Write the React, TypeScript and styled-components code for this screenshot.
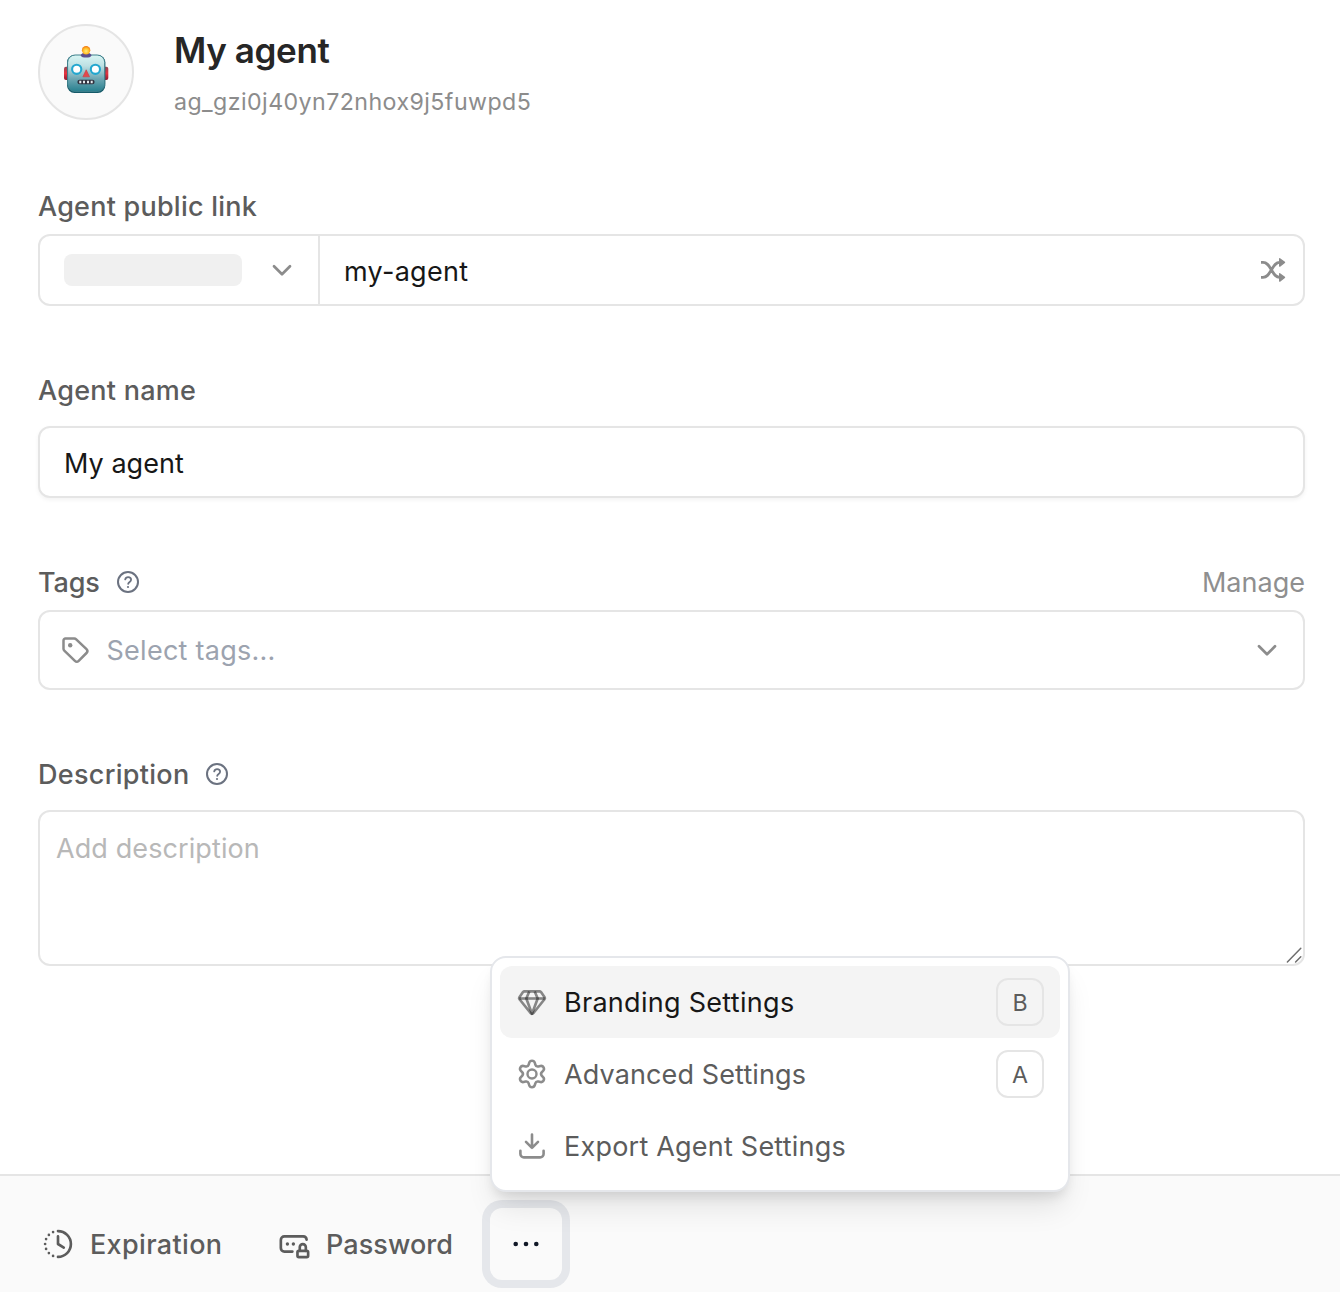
import React from "react";
import styled, { createGlobalStyle } from "styled-components";

const GlobalStyle = createGlobalStyle`
  * { box-sizing: border-box; }
  body {
    margin: 0;
    background: #fff;
    font-family: Inter, "Liberation Sans", sans-serif;
    font-size: 27px;
    line-height: 39px;
    color: #171717;
    -webkit-font-smoothing: antialiased;
  }
  button, input, textarea { font: inherit; color: inherit; margin: 0; }
  svg { display: block; flex: none; }
`;

const Page = styled.div`
  display: flex;
  flex-direction: column;
  width: 1340px;
  height: 1292px;
  overflow: hidden;
`;

const Form = styled.main`
  flex: 1;
  padding: 24px 35px 0 38px;
`;

const Header = styled.header`
  display: flex;
  gap: 40px;
  height: 96px;
`;

const Avatar = styled.div`
  display: flex;
  align-items: center;
  justify-content: center;
  width: 96px;
  height: 96px;
  border: 2px solid #e5e5e5;
  border-radius: 50%;
  background: #fafafa;
`;

const Title = styled.h1`
  margin: 0;
  padding-top: 1px;
  font-size: 35px;
  line-height: 50px;
  font-weight: 600;
  letter-spacing: -0.38px;
  color: #262626;
`;

const AgentId = styled.div`
  margin-top: 10px;
  font-size: 23.200px;
  line-height: 34px;
  letter-spacing: 0.43px;
  color: #8c8c8c;
`;

const Field = styled.section<{ $top: number; $gap: number }>`
  display: flex;
  flex-direction: column;
  gap: ${(p) => p.$gap}px;
  margin-top: ${(p) => p.$top}px;
`;

const LabelRow = styled.div`
  display: flex;
  align-items: center;
  justify-content: space-between;
  height: 40px;
`;

const Label = styled.label<{ $track: number }>`
  display: flex;
  align-items: center;
  gap: 17px;
  font-weight: 500;
  letter-spacing: ${(p) => p.$track}px;
  color: #5c5c5c;
`;

const LabelText = styled.span`
  padding-top: 1px;
`;

const Manage = styled.a`
  padding-top: 1px;
  letter-spacing: 0.02px;
  color: #8f8f8f;
`;

const Box = styled.div<{ $height: number; $shadow?: boolean }>`
  display: flex;
  align-items: center;
  height: ${(p) => p.$height}px;
  border: 2px solid #e5e5e5;
  border-radius: 12px;
  background: #fff;
  box-shadow: ${(p) => (p.$shadow ? "0 2px 4px rgba(0, 0, 0, 0.05)" : "none")};
`;

const Domain = styled.div`
  display: flex;
  align-items: center;
  justify-content: space-between;
  align-self: stretch;
  width: 280px;
  padding: 0 24px;
  border-right: 2px solid #e5e5e5;
`;

const Skeleton = styled.div`
  width: 178px;
  height: 32px;
  border-radius: 8px;
  background: #f0f0f0;
`;

const TextInput = styled.input<{ $track: number }>`
  flex: 1;
  min-width: 0;
  height: 100%;
  padding: 3px 24px 0;
  border: 0;
  outline: 0;
  background: transparent;
  letter-spacing: ${(p) => p.$track}px;
`;

const IconSlot = styled.span<{ $left?: number; $right?: number }>`
  margin-left: ${(p) => p.$left ?? 0}px;
  margin-right: ${(p) => p.$right ?? 0}px;
`;

const Placeholder = styled.span`
  flex: 1;
  padding: 1px 0 0 17.500px;
  letter-spacing: 0.26px;
  color: #9ca3af;
`;

const AreaWrap = styled.div`
  position: relative;
  height: 156px;
`;

const Area = styled.textarea`
  display: block;
  width: 100%;
  height: 100%;
  padding: 17px 16px 15px;
  border: 2px solid #e5e5e5;
  border-radius: 12px;
  outline: 0;
  resize: none;
  letter-spacing: 0.1px;
  &::placeholder { color: #b8b8b8; }
`;

const Grip = styled.svg`
  position: absolute;
  right: 2px;
  bottom: 1px;
`;

const Footer = styled.footer`
  display: flex;
  align-items: center;
  height: 118px;
  padding: 20px 0 0 42px;
  border-top: 2px solid #e5e5e5;
  background: #fafafa;
`;

const FooterAction = styled.div<{ $width: number; $track: number }>`
  display: flex;
  align-items: center;
  gap: 16px;
  width: ${(p) => p.$width}px;
  font-weight: 500;
  letter-spacing: ${(p) => p.$track}px;
  color: #5c5c5c;
`;

const MoreAnchor = styled.div`
  position: relative;
`;

const MoreButton = styled.button`
  display: flex;
  align-items: center;
  justify-content: center;
  width: 72px;
  height: 72px;
  padding: 0;
  border: 0;
  border-radius: 12px;
  background: transparent;
  box-shadow: 0 0 0 8px #e5e7eb;
`;

const Menu = styled.div`
  position: absolute;
  left: 0;
  bottom: 88px;
  width: 580px;
  padding: 8px;
  border: 2px solid #e5e7eb;
  border-radius: 16px;
  background: #fff;
  box-shadow: 0 20px 30px -6px rgba(0, 0, 0, 0.1), 0 8px 12px -4px rgba(0, 0, 0, 0.1);
`;

const MenuItem = styled.div<{ $active?: boolean }>`
  display: flex;
  align-items: center;
  gap: 16px;
  height: 72px;
  padding: 0 16px;
  border-radius: 12px;
  background: ${(p) => (p.$active ? "#f4f4f4" : "transparent")};
  color: ${(p) => (p.$active ? "#171717" : "#5c5c5c")};
`;

const MenuText = styled.span<{ $track: number }>`
  flex: 1;
  padding-top: 1px;
  letter-spacing: ${(p) => p.$track}px;
`;

const Key = styled.kbd`
  display: flex;
  align-items: center;
  justify-content: center;
  width: 48px;
  height: 48px;
  padding-top: 2px;
  border: 2px solid #e5e5e5;
  border-radius: 12px;
  font-family: inherit;
  font-size: 23.200px;
  line-height: 32px;
  color: #5c5c5c;
`;

const Robot = () => (
  <svg width="48" height="52" viewBox="0 0 48 52">
    <defs>
      <linearGradient id="face" x1="0" y1="0" x2="0" y2="1">
        <stop offset="0" stopColor="#d9f6f4" />
        <stop offset="0.3" stopColor="#bde0e3" />
        <stop offset="0.65" stopColor="#6fa7b3" />
        <stop offset="1" stopColor="#27808f" />
      </linearGradient>
      <linearGradient id="ear" x1="0" y1="0" x2="0" y2="1">
        <stop offset="0" stopColor="#8e4654" />
        <stop offset="0.5" stopColor="#e8333f" />
        <stop offset="1" stopColor="#8f1c33" />
      </linearGradient>
      <radialGradient id="bulb" cx="0.5" cy="0.6" r="0.6">
        <stop offset="0" stopColor="#ffec7a" />
        <stop offset="0.55" stopColor="#ffc02a" />
        <stop offset="1" stopColor="#f2750e" />
      </radialGradient>
    </defs>
    <rect x="2" y="20.700" width="6" height="13.300" rx="2" fill="url(#ear)" />
    <rect x="40.300" y="20.700" width="6" height="13.300" rx="2" fill="url(#ear)" />
    <rect x="5" y="9" width="38.300" height="38" rx="7.500" fill="#155a69" />
    <rect x="5.600" y="9" width="37.100" height="36.400" rx="7.500" fill="url(#face)" stroke="#3f818d" strokeWidth="1" />
    <path d="M18.600 9.400c.6-2 2.800-3 5.500-3s4.900 1 5.500 3c-.8 1.500-2.800 2.200-5.500 2.200s-4.700-.7-5.500-2.200z" fill="#5c4f8e" />
    <circle cx="24.100" cy="4.300" r="4.200" fill="url(#bulb)" />
    <circle cx="14.700" cy="23.300" r="4.600" fill="#fff" stroke="#24a7cf" strokeWidth="2.100" />
    <circle cx="33.400" cy="23.300" r="4.600" fill="#fff" stroke="#24a7cf" strokeWidth="2.100" />
    <path d="M24.200 23.800l3.300 7h-6.600z" fill="#e4484b" stroke="#c8434b" strokeWidth="0.700" strokeLinejoin="round" />
    <rect x="15.400" y="33.700" width="17.200" height="4.600" rx="2.200" fill="#30323f" />
    <path d="M17.300 34.700h2v2.600h-2zM21 34.700h2v2.600h-2zM25 34.700h2v2.600h-2zM28.700 34.700h2v2.600h-2z" fill="#e4eaed" />
  </svg>
);

const Chevron = () => (
  <svg width="24" height="24" viewBox="0 0 24 24" fill="none" stroke="#8c8c8c" strokeWidth="2.700" strokeLinecap="round" strokeLinejoin="round">
    <path d="M4 8.300l8 8 8-8" />
  </svg>
);

const Shuffle = () => (
  <svg width="28" height="28" viewBox="0 0 28 28" fill="none" stroke="#8c8c8c" strokeWidth="2.800">
    <path d="M2 6.400h2c4.200 0 5.800 3.200 8.400 7.500s4.200 7.500 8.400 7.500M2 21.400h2c4.200 0 5.800-3.200 8.400-7.500s4.200-7.500 8.400-7.500" />
    <path d="M20.700 2.700l4.800 3.700-4.800 3.700zM20.700 17.700l4.800 3.700-4.800 3.700z" fill="#8c8c8c" strokeWidth="1.400" strokeLinejoin="round" />
  </svg>
);

const Help = () => (
  <svg width="22" height="24" viewBox="1 0 22 24" fill="none" stroke="#6b7280" strokeWidth="2" strokeLinecap="round" strokeLinejoin="round">
    <circle cx="12" cy="12" r="10" />
    <path d="M9.200 9.400c.4-1.400 1.500-2.200 2.900-2.200 1.700 0 3 1.100 3 2.600 0 2.100-2.700 2.100-2.900 4" strokeWidth="1.800" />
    <circle cx="12" cy="17" r="1.100" fill="#6b7280" stroke="none" />
  </svg>
);

const Tag = () => (
  <svg width="28" height="28" viewBox="0 0 28 28" fill="none" stroke="#8c8c8c" strokeWidth="2.500" strokeLinejoin="round">
    <path d="M2.500 4.400a1.900 1.900 0 0 1 1.900-1.900h8.900c.7 0 1.400.3 1.900.8l10.300 9.900a2.700 2.700 0 0 1 0 3.800l-7.800 7.800a2.700 2.700 0 0 1-3.800 0L3.300 14.600a2.700 2.700 0 0 1-.8-1.900z" />
    <circle cx="9.200" cy="9.300" r="2.200" fill="#8c8c8c" stroke="none" />
  </svg>
);

const Diamond = () => (
  <svg width="32" height="32" viewBox="0 0 32 32" fill="none" stroke="#171717" strokeOpacity="0.5" strokeWidth="2.600" strokeLinejoin="round">
    <path d="M8.500 5.400h15a2 2 0 0 1 1.500.7l3.600 5.200a1.600 1.600 0 0 1-.1 2L17.300 27.200a1.700 1.700 0 0 1-2.600 0L3.500 13.300a1.600 1.600 0 0 1-.1-2L7 6.100a2 2 0 0 1 1.500-.7z" />
    <path d="M3.300 12.500h25.400" />
    <path d="M13.300 5.400l-3 7.100L16 27.800l5.700-15.300-3-7.100" />
  </svg>
);

const Gear = () => (
  <svg width="32" height="32" viewBox="0 0 32 32" fill="none" stroke="#8c8c8c" strokeWidth="2.400" strokeLinejoin="round">
    <circle cx="16" cy="16" r="4.500" />
    <path
      transform="translate(16 16) scale(1.070) translate(-16 -15)"
      d="M13.400 4.500C13.800 3.100 14.700 2.600 16 2.600s2.200.5 2.600 1.900l.5 1.700c.4 1.300 1.600 2 2.900 1.700l1.800-.4c1.400-.3 2.400.2 3 1.300s.6 2.200-.4 3.200l-1.200 1.300c-.9 1-.9 2.400 0 3.400l1.200 1.300c1 1 1 2.100.4 3.200s-1.600 1.600-3 1.300l-1.800-.4c-1.300-.3-2.500.4-2.900 1.700l-.5 1.700c-.4 1.400-1.300 1.900-2.600 1.900s-2.200-.5-2.600-1.900l-.5-1.700c-.4-1.300-1.600-2-2.900-1.700l-1.800.4c-1.400.3-2.400-.2-3-1.300s-.6-2.200.4-3.200l1.200-1.300c.9-1 .9-2.400 0-3.400l-1.200-1.300c-1-1-1-2.100-.4-3.200s1.600-1.600 3-1.300l1.800.4c1.300.3 2.500-.4 2.900-1.700z"
    />
  </svg>
);

const Download = () => (
  <svg width="32" height="32" viewBox="0 0 32 32" fill="none" stroke="#8c8c8c" strokeWidth="2.600" strokeLinecap="round" strokeLinejoin="round">
    <path d="M16 4.500v13.300M10 11.800l6 6 6-6" />
    <path d="M4.400 20.700v3.200a3.500 3.500 0 0 0 3.500 3.500h16.200a3.500 3.500 0 0 0 3.500-3.500v-3.200" />
  </svg>
);

const Clock = () => (
  <svg width="32" height="32" viewBox="0 0 18 18" fill="none" stroke="#5c5c5c" strokeWidth="1.500" strokeLinecap="round" strokeLinejoin="round">
    <path d="M9 1.750a7.250 7.250 0 0 1 0 14.500M9 4.750V9l3.250 2" />
    <g fill="#5c5c5c" stroke="none">
      <circle cx="6.230" cy="2.300" r="0.750" />
      <circle cx="3.870" cy="3.870" r="0.750" />
      <circle cx="2.300" cy="6.230" r="0.750" />
      <circle cx="1.750" cy="9" r="0.750" />
      <circle cx="2.300" cy="11.770" r="0.750" />
      <circle cx="3.870" cy="14.130" r="0.750" />
      <circle cx="6.230" cy="15.700" r="0.750" />
    </g>
  </svg>
);

const Password = () => (
  <svg width="32" height="32" viewBox="0 0 18 18" fill="none" stroke="#5c5c5c" strokeWidth="1.500" strokeLinecap="round" strokeLinejoin="round">
    <path d="M16.100 6.500a2 2 0 0 0-1.900-1.750H3.600a2 2 0 0 0-2 2v4.500a2 2 0 0 0 2 2h4.500" />
    <rect x="10.950" y="12.850" width="6" height="3.500" rx="0.800" />
    <path d="M12.250 12.850v-2.100a1.700 1.700 0 0 1 3.400 0v2.100" />
    <g fill="#5c5c5c" stroke="none">
      <circle cx="5.300" cy="9" r="0.950" />
      <circle cx="8.650" cy="9" r="0.950" />
    </g>
  </svg>
);

const Dots = () => (
  <svg width="32" height="32" viewBox="0 0 32 32" fill="#111827">
    <circle cx="5.700" cy="16" r="2.300" />
    <circle cx="16" cy="16" r="2.300" />
    <circle cx="26.300" cy="16" r="2.300" />
  </svg>
);

export default function App() {
  return (
    <Page>
      <GlobalStyle />
      <Form>
        <Header>
          <Avatar><Robot /></Avatar>
          <div>
            <Title>My agent</Title>
            <AgentId>ag_gzi0j40yn72nhox9j5fuwpd5</AgentId>
          </div>
        </Header>

        <Field $top={66} $gap={8}>
          <LabelRow>
            <Label $track={0.23}><LabelText>Agent public link</LabelText></Label>
          </LabelRow>
          <Box $height={72}>
            <Domain>
              <Skeleton />
              <Chevron />
            </Domain>
            <TextInput $track={0.29} defaultValue="my-agent" />
            <IconSlot $right={16}><Shuffle /></IconSlot>
          </Box>
        </Field>

        <Field $top={64} $gap={16}>
          <LabelRow>
            <Label $track={0.25}><LabelText>Agent name</LabelText></Label>
          </LabelRow>
          <Box $height={72} $shadow>
            <TextInput $track={0.03} defaultValue="My agent" />
          </Box>
        </Field>

        <Field $top={64} $gap={8}>
          <LabelRow>
            <Label $track={-0.12}><LabelText>Tags</LabelText> <Help /></Label>
            <Manage>Manage</Manage>
          </LabelRow>
          <Box $height={80}>
            <IconSlot $left={21}><Tag /></IconSlot>
            <Placeholder>Select tags...</Placeholder>
            <IconSlot $right={24}><Chevron /></IconSlot>
          </Box>
        </Field>

        <Field $top={64} $gap={16}>
          <LabelRow>
            <Label $track={0.29}><LabelText>Description</LabelText> <Help /></Label>
          </LabelRow>
          <AreaWrap>
            <Area placeholder="Add description" />
            <Grip width="18" height="18" viewBox="0 0 18 18" stroke="#6e6e6e" strokeWidth="1.500" strokeLinecap="round">
              <path d="M2.400 15L15.800 1.200M10.600 15l5.200-5.200" />
            </Grip>
          </AreaWrap>
        </Field>
      </Form>

      <Footer>
        <FooterAction $width={236} $track={0.34}><Clock /><LabelText>Expiration</LabelText></FooterAction>
        <FooterAction $width={212} $track={0.07}><Password /><LabelText>Password</LabelText></FooterAction>
        <MoreAnchor>
          <MoreButton aria-label="More"><Dots /></MoreButton>
          <Menu>
            <MenuItem $active>
              <Diamond />
              <MenuText $track={0.29}>Branding Settings</MenuText>
              <Key>B</Key>
            </MenuItem>
            <MenuItem>
              <Gear />
              <MenuText $track={0.12}>Advanced Settings</MenuText>
              <Key>A</Key>
            </MenuItem>
            <MenuItem>
              <Download />
              <MenuText $track={0.22}>Export Agent Settings</MenuText>
            </MenuItem>
          </Menu>
        </MoreAnchor>
      </Footer>
    </Page>
  );
}
